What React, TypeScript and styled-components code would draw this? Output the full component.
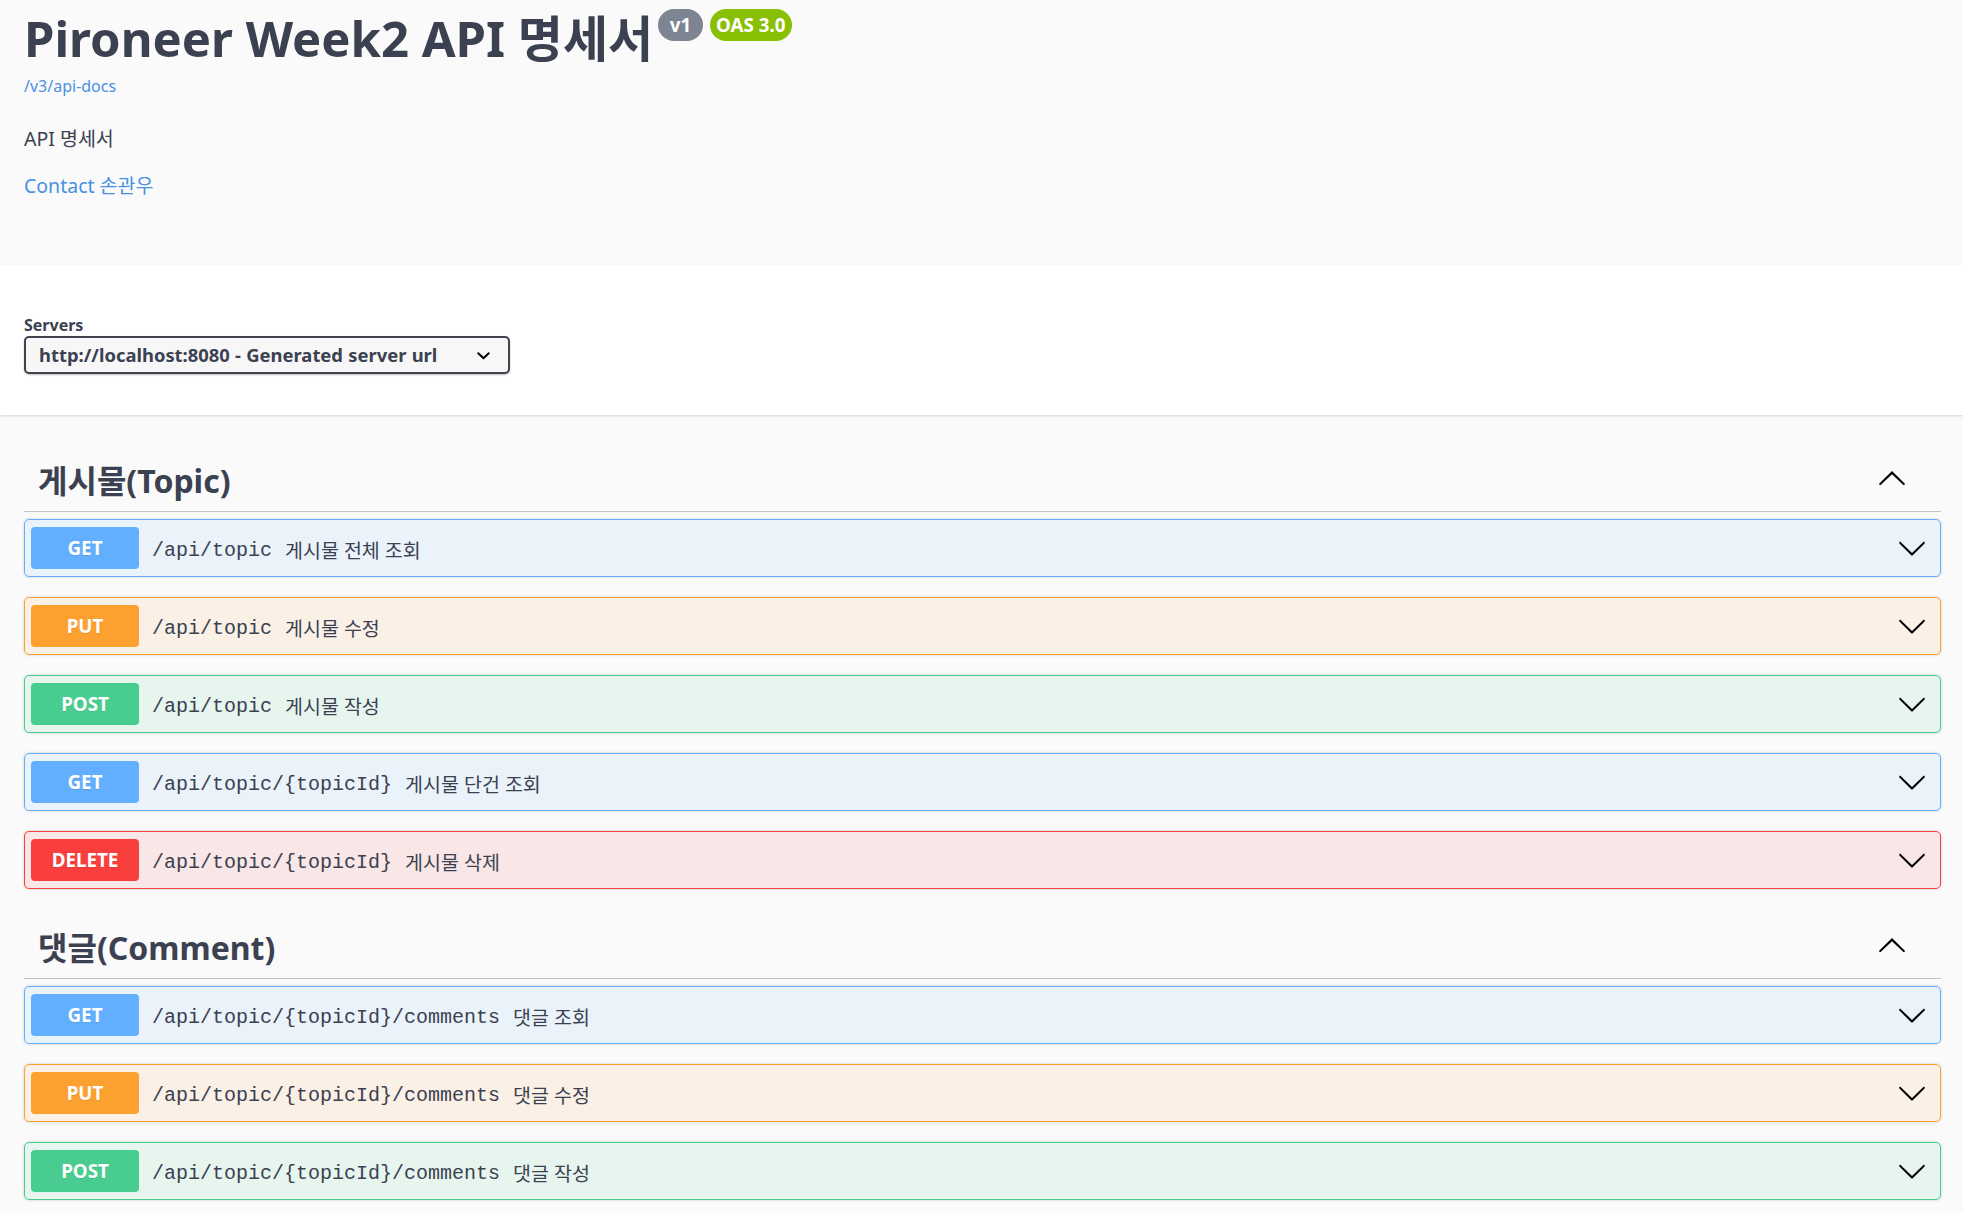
import React from "react";
import styled, { createGlobalStyle } from "styled-components";

const GlobalStyle = createGlobalStyle`
  html, body { margin: 0; padding: 0; background: #fafafa; }
  body {
    font-family: "Noto Sans", "Noto Sans CJK KR", sans-serif;
    color: #3b4151;
  }
  * { box-sizing: border-box; }
`;

const Info = styled.section`
  height: 265px;
  padding: 9px 22px 0 24px;
  background: #fafafa;
`;

const TitleRow = styled.div`
  display: flex;
  align-items: flex-start;
`;

const Title = styled.h2`
  margin: 0;
  font-size: 49px;
  line-height: 58px;
  font-weight: 700;
  color: #3b4151;
`;

const Stamp = styled.span<{ $bg: string; $ml: number; $min: number }>`
  display: inline-flex;
  align-items: center;
  justify-content: center;
  height: 32px;
  min-width: ${(p) => p.$min}px;
  margin-left: ${(p) => p.$ml}px;
  padding: 0 6px;
  border-radius: 57px;
  background: ${(p) => p.$bg};
  color: #fff;
  font-size: 18.8px;
  font-weight: 700;
  line-height: 32px;
`;

const BaseUrl = styled.a`
  display: block;
  margin-top: 9px;
  font-size: 16px;
  line-height: 20px;
  color: #4990e2;
  text-decoration: none;
`;

const Description = styled.p`
  margin: 30px 0 0;
  font-size: 19.5px;
  line-height: 26px;
  color: #3b4151;
`;

const ContactLink = styled.a`
  display: block;
  margin-top: 21px;
  font-size: 19.5px;
  line-height: 26px;
  color: #4990e2;
  text-decoration: none;
`;

const Scheme = styled.section`
  height: 150px;
  padding: 50px 22px 0 24px;
  margin-bottom: 27px;
  background: #fff;
  box-shadow: 0 1px 2px 0 rgba(0, 0, 0, 0.15);
`;

const ServersLabel = styled.span`
  display: block;
  font-size: 16px;
  line-height: 20px;
  font-weight: 700;
  color: #3b4151;
`;

const Select = styled.div`
  display: flex;
  align-items: center;
  justify-content: space-between;
  width: 486px;
  height: 38px;
  margin-top: 1px;
  padding: 0 15px 0 13px;
  border: 2px solid #41444e;
  border-radius: 5px;
  background: #f7f7f7;
  box-shadow: 0 1px 2px 0 rgba(0, 0, 0, 0.25);
  font-size: 18.4px;
  font-weight: 700;
  color: #3b4151;
  line-height: 34px;
  word-spacing: 0.5px;
`;

const SelectArrow = styled.svg`
  width: 27px;
  height: 27px;
  margin-right: -4px;
  fill: #000;
`;

const Wrapper = styled.main`
  padding: 0 22px 0 24px;
`;

const TagSection = styled.section`
  display: flex;
  flex-direction: column;
`;

const TagHeading = styled.div`
  display: flex;
  align-items: flex-start;
  height: 70px;
  padding-left: 14px;
  margin-bottom: 7px;
  border-bottom: 1px solid rgba(59, 65, 81, 0.3);
`;

const TagTitle = styled.h3`
  margin: 8px 0 0;
  font-size: 32px;
  line-height: 61px;
  font-weight: 700;
  color: #3b4151;
`;

const TagArrow = styled.svg`
  width: 30px;
  height: 30px;
  margin: 22px 34px 0 auto;
  fill: #000;
  transform: rotate(180deg);
`;

const methodColors: Record<string, string> = {
  GET: "#61affe",
  PUT: "#fca130",
  POST: "#49cc90",
  DELETE: "#f93e3e",
};

const methodBg: Record<string, string> = {
  GET: "rgba(97, 175, 254, 0.1)",
  PUT: "rgba(252, 161, 48, 0.1)",
  POST: "rgba(73, 204, 144, 0.1)",
  DELETE: "rgba(249, 62, 62, 0.1)",
};

const Opblock = styled.div<{ $method: string }>`
  display: flex;
  align-items: center;
  height: 58px;
  padding: 0 6px;
  margin-bottom: 20px;
  border: 1px solid ${(p) => methodColors[p.$method]};
  border-radius: 5px;
  background: ${(p) => methodBg[p.$method]};
  box-shadow: 0 0 3px rgba(0, 0, 0, 0.19);
`;

const Method = styled.span<{ $method: string }>`
  flex: none;
  width: 108px;
  height: 42px;
  border-radius: 4px;
  background: ${(p) => methodColors[p.$method]};
  color: #fff;
  font-size: 18.8px;
  font-weight: 700;
  line-height: 42px;
  text-align: center;
  text-shadow: 0 1px 0 rgba(0, 0, 0, 0.1);
`;

const Path = styled.span`
  padding: 5px 13px 0;
  font-family: "Liberation Mono", "DejaVu Sans Mono", monospace;
  font-size: 20px;
  color: #3b4151;
  white-space: nowrap;
`;

const Summary = styled.span`
  padding-top: 3px;
  font-size: 19.5px;
  color: #3b4151;
  white-space: nowrap;
`;

const OpArrow = styled.svg`
  width: 30px;
  height: 30px;
  margin: 0 7px 0 auto;
  fill: #000;
`;

const CHEVRON =
  "M17.418 6.109c.272-.268.709-.268.979 0s.271.701 0 .969l-7.908 7.83c-.27.268-.707.268-.979 0l-7.908-7.83c-.27-.268-.27-.701 0-.969.271-.268.709-.268.979 0L10 13.25l7.418-7.141z";

const SMALL_CHEVRON =
  "M13.418 7.859a.695.695 0 0 1 .978 0 .68.68 0 0 1 0 .969l-3.908 3.83a.697.697 0 0 1-.979 0l-3.908-3.83a.68.68 0 0 1 0-.969.695.695 0 0 1 .978 0L10 11l3.418-3.141z";

type Op = { method: string; path: string; summary: string };

const sections: { title: string; ops: Op[] }[] = [
  {
    title: "게시물(Topic)",
    ops: [
      { method: "GET", path: "/api/topic", summary: "게시물 전체 조회" },
      { method: "PUT", path: "/api/topic", summary: "게시물 수정" },
      { method: "POST", path: "/api/topic", summary: "게시물 작성" },
      { method: "GET", path: "/api/topic/{topicId}", summary: "게시물 단건 조회" },
      { method: "DELETE", path: "/api/topic/{topicId}", summary: "게시물 삭제" },
    ],
  },
  {
    title: "댓글(Comment)",
    ops: [
      { method: "GET", path: "/api/topic/{topicId}/comments", summary: "댓글 조회" },
      { method: "PUT", path: "/api/topic/{topicId}/comments", summary: "댓글 수정" },
      { method: "POST", path: "/api/topic/{topicId}/comments", summary: "댓글 작성" },
    ],
  },
];

export default function App() {
  return (
    <>
      <GlobalStyle />
      <Info>
        <TitleRow>
          <Title>Pironeer Week2 API 명세서</Title>
          <Stamp $bg="#7d8492" $ml={5} $min={45}>v1</Stamp>
          <Stamp $bg="#89bf04" $ml={7} $min={0}>OAS 3.0</Stamp>
        </TitleRow>
        <BaseUrl href="#">/v3/api-docs</BaseUrl>
        <Description>API 명세서</Description>
        <ContactLink href="#">Contact 손관우</ContactLink>
      </Info>
      <Scheme>
        <ServersLabel>Servers</ServersLabel>
        <Select>
          <span>http://localhost:8080 - Generated server url</span>
          <SelectArrow viewBox="0 0 20 20">
            <path d={SMALL_CHEVRON} />
          </SelectArrow>
        </Select>
      </Scheme>
      <Wrapper>
        {sections.map((s) => (
          <TagSection key={s.title}>
            <TagHeading>
              <TagTitle>{s.title}</TagTitle>
              <TagArrow viewBox="0 0 20 20">
                <path d={CHEVRON} />
              </TagArrow>
            </TagHeading>
            {s.ops.map((op, i) => (
              <Opblock key={i} $method={op.method}>
                <Method $method={op.method}>{op.method}</Method>
                <Path>{op.path}</Path>
                <Summary>{op.summary}</Summary>
                <OpArrow viewBox="0 0 20 20">
                  <path d={CHEVRON} />
                </OpArrow>
              </Opblock>
            ))}
          </TagSection>
        ))}
      </Wrapper>
    </>
  );
}
